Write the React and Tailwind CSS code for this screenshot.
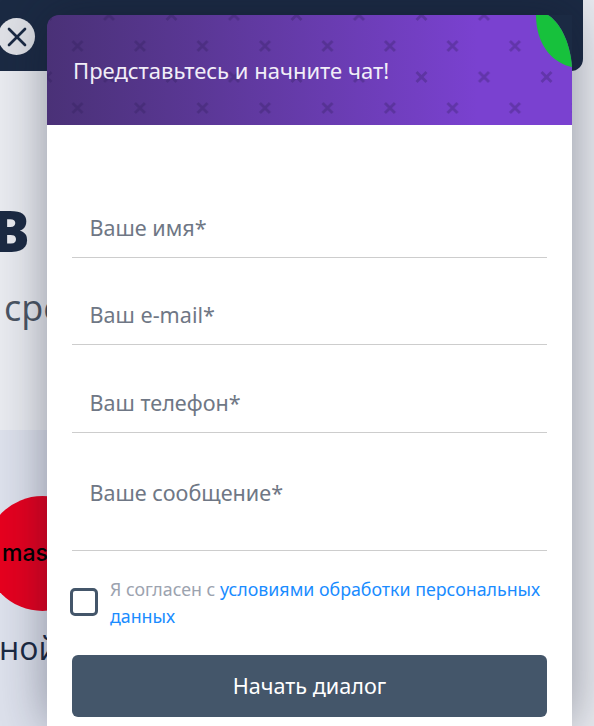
import { X } from 'lucide-react';

const FONT = "font-['Noto_Sans','Open_Sans',sans-serif]";

const FIELDS = [
  { label: 'Ваше имя*', height: 'h-[88px]' },
  { label: 'Ваш e-mail*', height: 'h-[87px]' },
  { label: 'Ваш телефон*', height: 'h-[88px]' },
];

function HeaderPattern() {
  return (
    <svg className="absolute inset-0 w-full h-full" aria-hidden="true">
      <defs>
        <pattern id="crosses" x="0" y="0" width="62.5" height="62" patternUnits="userSpaceOnUse">
          <path d="M25.500 26l10 10M35.500 26l-10 10" stroke="#2b1a55" strokeOpacity="0.3" strokeWidth="3" fill="none" />
          <path d="M57 57l10 10M67 57l-10 10M-5.500 57l10 10M4.500 57l-10 10" stroke="#2b1a55" strokeOpacity="0.3" strokeWidth="3" fill="none" />
          <path d="M57 -5l10 10M67 -5l-10 10M-5.500 -5l10 10M4.500 -5l-10 10" stroke="#2b1a55" strokeOpacity="0.3" strokeWidth="3" fill="none" />
        </pattern>
      </defs>
      <rect width="100%" height="100%" fill="url(#crosses)" />
    </svg>
  );
}

// green leaf, the dark part is the bar showing past the cut corner
function Leaf() {
  return (
    <svg className="absolute right-0 top-0" width="37" height="53" viewBox="0 0 37 53" aria-hidden="true">
      <path d="M13 0L37 0L37 52C35 24 23 6 13 0Z" fill="#1b2a43" />
      <path d="M1 0L13 0C23 6 35 24 37 52C20 49 1 32 1 0Z" fill="#17c13c" />
    </svg>
  );
}

function Page() {
  return (
    <div className="h-full flex flex-col bg-[#e9ebf0]">
      <div className="h-[71px] w-[583px] shrink-0 bg-[#1b2a43] rounded-br-[12px]" />
      <div className="h-[359px] shrink-0 overflow-hidden">
        <p className="mt-[124px] -ml-[8px] text-[56px] leading-[70px] font-extrabold text-[#1b2a43] font-['Open_Sans',sans-serif]">В</p>
        <p className="mt-[19px] ml-[4px] text-[36px] leading-[48px] text-[#4b5563] font-['Open_Sans',sans-serif] whitespace-nowrap">сре</p>
      </div>
      <div className="flex-1 w-[560px] bg-[#dde1ec] overflow-hidden">
        <div className="mt-[66px] -ml-[15px] w-[115px] h-[115px] rounded-full bg-[#e6001f] flex items-center pl-[17px]">
          <span className="text-[23px] font-medium text-black font-['Inter',sans-serif] whitespace-nowrap">mas</span>
        </div>
        <p className="mt-[15px] -ml-[1px] text-[32px] leading-[44px] text-[#1b2a43] font-['Open_Sans',sans-serif] whitespace-nowrap">ной</p>
      </div>
    </div>
  );
}

export default function App() {
  return (
    <div className={`relative w-[594px] h-[726px] overflow-hidden ${FONT}`}>
      <Page />

      <button className="absolute left-[-2px] top-[18px] w-[37px] h-[37px] rounded-full bg-[#dfe1e6] flex items-center justify-center text-[#1b2a43]">
        <X size={32} strokeWidth={2} />
      </button>

      <div className="absolute left-[47px] top-[15px] w-[525px] h-[711px] flex flex-col rounded-tl-[12px] shadow-[0_0_50px_rgba(20,25,45,0.42)]">
        <div className="relative h-[110px] shrink-0 flex items-center rounded-tl-[12px] overflow-hidden bg-gradient-to-r from-[#4a3177] to-[#7a41d0] to-[82%]">
          <HeaderPattern />
          <Leaf />
          <h2 className="relative pl-[26px] text-[22px] text-[#f1eef8]">Представьтесь и начните чат!</h2>
        </div>

        <form className="flex-1 bg-white px-[25px] pt-[45px]">
          {FIELDS.map((field) => (
            <input
              key={field.label}
              placeholder={field.label}
              className={`block w-full ${field.height} pt-[28px] pb-[1px] px-[17.500px] text-[21.6px] border-b border-[#cdcdcd] outline-none placeholder:text-[#6f7785] text-[#6f7785]`}
            />
          ))}
          <textarea
            placeholder="Ваше сообщение*"
            className="block w-full h-[118px] pt-[46px] px-[17.500px] text-[21.6px] leading-[27px] border-b border-[#cdcdcd] outline-none resize-none placeholder:text-[#6f7785]"
          />

          <label className="flex gap-[12px] mt-[25px] -ml-[2px]">
            <span className="shrink-0 w-[28px] h-[28px] mt-[12px] rounded-[5px] border-[3px] border-[#44566a] bg-white" />
            <span className="text-[17.8px] leading-[27px] text-[#9ca3af]">
              Я согласен с <a className="text-[#1a8cff]">условиями обработки персональных данных</a>
            </span>
          </label>

          <button type="button" className="block w-full h-[62px] mt-[25px] rounded-[6px] bg-[#44566a] text-white text-[21.6px]">
            Начать диалог
          </button>
        </form>
      </div>
    </div>
  );
}
